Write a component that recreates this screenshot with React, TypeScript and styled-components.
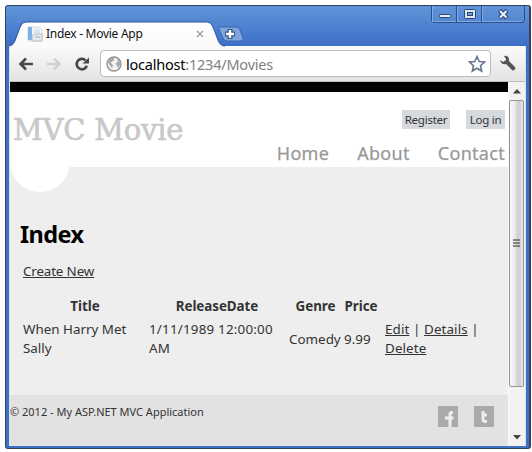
import React from 'react';
import styled, { createGlobalStyle } from 'styled-components';

const GlobalStyle = createGlobalStyle`
  * { box-sizing: border-box; }
  body { margin: 0; background: #fff; overflow: hidden; }
`;

const Screen = styled.div`
  width: 532px;
  height: 452px;
  padding: 5px 1px 2px 5px;
  font-family: "Noto Sans", "Open Sans", sans-serif;
  color: #333;
`;

const Window = styled.div`
  width: 526px;
  height: 444px;
  display: flex;
  flex-direction: column;
  border: 1px solid #34435c;
  border-right-width: 2px;
  border-radius: 3px;
  padding: 0 3px 2px;
  background: linear-gradient(#6295d9 0, #5488d2 14px, #3f70c8 38px, #3e70c6 100%);
`;

const TitleBar = styled.div`
  height: 40px;
  flex: none;
  display: flex;
`;

const TabArea = styled.div`
  position: relative;
  width: 245px;
  height: 40px;
`;

const TabShape = styled.svg`
  position: absolute;
  left: 0;
  top: 0;
`;

const TabContent = styled.div`
  position: relative;
  display: flex;
  align-items: center;
  height: 24px;
  margin: 16px 0 0 18px;
`;

const TabTitle = styled.span`
  width: 145px;
  margin-left: 3px;
  font-size: 12px;
  line-height: 24px;
  letter-spacing: -0.28px;
  color: #111;
  white-space: nowrap;
`;

const WindowControls = styled.div`
  display: flex;
  height: 17px;
  margin-left: auto;
  margin-right: 1px;
  border: 1px solid #2d4f8c;
  border-top: 0;
  border-radius: 0 0 4px 4px;
  box-shadow: inset 0 -1px #83abe2;
`;

const ControlButton = styled.div<{ $width: number }>`
  width: ${p => p.$width}px;
  display: flex;
  align-items: center;
  justify-content: center;
  border-left: 1px solid #83abe2;
  & + & { box-shadow: -1px 0 #2d4f8c; }
`;

const Body = styled.div`
  flex: 1;
  min-height: 0;
  display: flex;
  flex-direction: column;
  border-left: 1px solid #dce0e8;
  border-right: 1px solid #dce0e8;
`;

const Toolbar = styled.div`
  height: 36px;
  flex: none;
  display: flex;
  align-items: center;
  padding: 0 8px;
  background: linear-gradient(#fbfbfb, #e3e3e3);
  border-bottom: 1px solid #bcbcbc;
`;

const NavIcon = styled.svg`
  flex: none;
  margin-right: 12px;
`;

const AddressBar = styled.div`
  width: 391px;
  height: 27px;
  margin-left: -2px;
  display: flex;
  align-items: center;
  padding: 0 4px 0 5px;
  background: #fff;
  border: 1px solid #bdbdbd;
  border-radius: 4px;
`;

const Url = styled.span`
  flex: 1;
  margin-left: 4px;
  font-size: 14.5px;
  line-height: 24px;
  letter-spacing: -0.22px;
  color: #808080;
  white-space: nowrap;
`;

const Host = styled.span`
  color: #000;
`;

const Wrench = styled.svg`
  margin-left: 8px;
`;

const Viewport = styled.div`
  flex: 1;
  min-height: 0;
  display: flex;
`;

const Page = styled.div`
  width: 498px;
  display: flex;
  flex-direction: column;
  background: #eee;
`;

const Header = styled.header`
  height: 85px;
  display: flex;
  justify-content: space-between;
  border-top: 10px solid #000;
  background: #fff;
`;

const Brand = styled.div`
  position: relative;
  padding: 20px 0 0 3px;
  font: 29px/36px "DejaVu Serif", serif;
  letter-spacing: -0.2px;
  color: #c8c8c8;
  -webkit-text-stroke: 0.6px #c8c8c8;
  white-space: nowrap;
`;

const BrandCircle = styled.div`
  position: absolute;
  left: 0;
  top: 40px;
  width: 60px;
  height: 60px;
  border-radius: 50%;
  background: #fff;
`;

const BrandName = styled.span`
  position: relative;
`;

const HeaderRight = styled.div`
  display: flex;
  flex-direction: column;
  align-items: flex-end;
  padding: 18px 3px 0 0;
`;

const Account = styled.div`
  display: flex;
  gap: 16px;
`;

const AccountLink = styled.span<{ $width: number }>`
  width: ${p => p.$width}px;
  height: 19px;
  text-align: center;
  font-size: 11.5px;
  line-height: 19px;
  letter-spacing: -0.25px;
  background: #d6d9de;
  white-space: nowrap;
`;

const Menu = styled.nav`
  display: flex;
  gap: 28px;
  margin-top: 11px;
  font-size: 18px;
  line-height: 26px;
  letter-spacing: 0.3px;
  color: #999;
  -webkit-text-stroke: 0.25px #999;
`;

const Main = styled.main`
  flex: 1;
  padding: 51px 10px 0;
  font-size: 13.4px;
  line-height: 19px;
`;

const Heading = styled.h2`
  margin: 0;
  font-size: 23.5px;
  line-height: 32px;
  letter-spacing: -0.6px;
  color: #000;
`;

const CreateRow = styled.p`
  margin: 12px 0 0 3px;
  letter-spacing: -0.15px;
`;

const MovieGrid = styled.div`
  display: grid;
  grid-template-columns: 124px 136px 51px 34px 100px;
  column-gap: 4px;
  row-gap: 4px;
  align-items: center;
  margin: 16px 0 0 3px;
`;

const HeadCell = styled.div<{ $shift?: number }>`
  margin-left: ${p => (p.$shift ?? 0) * 2}px;
  text-align: center;
  font-weight: 700;
  letter-spacing: -0.05px;
`;

const Cell = styled.div<{ $shift?: number; $tracking?: number }>`
  margin-left: ${p => p.$shift ?? 0}px;
  letter-spacing: ${p => p.$tracking ?? 0}px;
  white-space: nowrap;
`;

const Footer = styled.footer`
  height: 51px;
  display: flex;
  background: #e2e2e2;
  font-size: 11px;
`;

const Copyright = styled.span`
  flex: 1;
  padding-top: 8px;
  line-height: 18px;
`;

const Social = styled.div`
  display: flex;
  gap: 16px;
  padding: 11px 14px 0 0;
`;

const ScrollBar = styled.div`
  width: 17px;
  display: flex;
  flex-direction: column;
  background: #f2f2f2;
  border-left: 1px solid #fafafa;
`;

const ScrollArrow = styled.div`
  height: 18px;
  display: flex;
  align-items: center;
  justify-content: center;
`;

const ScrollThumb = styled.div`
  height: 287px;
  width: 15px;
  display: flex;
  align-items: center;
  justify-content: center;
  border: 1px solid #949494;
  border-radius: 2px;
  background: linear-gradient(90deg, #f8f8f8 0, #e9e9eb 40%, #cfcfd3 55%, #d2d2d6 75%, #e8e8ea 100%);
`;

const Spacer = styled.div`
  flex: 1;
`;

function App() {
  return (
    <Screen>
      <GlobalStyle />
      <Window>
        <TitleBar>
          <TabArea>
            <TabShape width="245" height="41" viewBox="0 0 245 41">
              <defs>
                <linearGradient id="tab" x1="0" y1="0" x2="0" y2="1">
                  <stop offset="0" stopColor="#fff" />
                  <stop offset="1" stopColor="#fafafa" />
                </linearGradient>
              </defs>
              <path d="M0 41C5 39 6 36 8 30L11 22Q13 16 17 16H198Q202 16 204 21L209 34Q211 40 216 40V41Z" fill="url(#tab)" />
              <path d="M0 40C5 38 6 35 8 29L11 21Q13 16 17 16H198Q202 16 204 21L209 34Q211 40 216 40" fill="none" stroke="#2c559f" strokeWidth="1" />
              <path d="M210 21H227Q230 21 231 24L234 32Q235 35 232 35H218Q215 35 214 32L210 23Q209 21 210 21Z" fill="#7fa5dc" stroke="#3967b1" />
              <path d="M216 28H226M221 23V33" stroke="#35588e" strokeWidth="5" />
              <path d="M217 28H225M221 24V32" stroke="#fff" strokeWidth="2.400" />
            </TabShape>
            <TabContent>
              <svg width="16" height="16" viewBox="0 0 16 16">
                <path d="M1 1H12L15 4V15H1Z" fill="#f4f5f6" stroke="#d4d8dc" />
                <path d="M1 1H5V14H1Z" fill="#79b2e4" />
                <path d="M7 4H13M7 6H13" stroke="#d0d5d9" />
                <path d="M7 8H15V15H5V10Z" fill="#e5e9eb" stroke="#b9c1c7" />
                <path d="M8 11H13" stroke="#aab3b9" />
              </svg>
              <TabTitle>Index - Movie App</TabTitle>
              <svg width="16" height="10" viewBox="0 0 16 10">
                <path d="M6 2L12 8M12 2L6 8" stroke="#a0a0a0" strokeWidth="1.400" />
              </svg>
            </TabContent>
          </TabArea>
          <WindowControls>
            <ControlButton $width={25}>
              <svg width="14" height="10"><rect x="1.500" y="5.500" width="11" height="3" rx="1" fill="#e8eef6" stroke="#294672" /></svg>
            </ControlButton>
            <ControlButton $width={25}>
              <svg width="12" height="11">
                <rect x="0.500" y="0.500" width="11" height="9" rx="1" fill="#dce7f5" stroke="#294672" />
                <rect x="3.500" y="3.500" width="5" height="3" fill="#6e9bda" stroke="#294672" />
              </svg>
            </ControlButton>
            <ControlButton $width={42}>
              <svg width="13" height="11">
                <path d="M2.500 1.500L10 9M10 1.500L2.500 9" stroke="#294672" strokeWidth="4.400" />
                <path d="M3 2L9.500 8.500M9.500 2L3 8.500" stroke="#e4ecf7" strokeWidth="2.300" />
              </svg>
            </ControlButton>
          </WindowControls>
        </TitleBar>
        <Body>
          <Toolbar>
            <NavIcon width="16" height="14" viewBox="0 0 16 14">
              <path d="M15 7H3M8 1.500L2.500 7L8 12.500" fill="none" stroke="#484848" strokeWidth="2.600" />
            </NavIcon>
            <NavIcon width="16" height="14" viewBox="0 0 16 14">
              <path d="M1 7H13M8 1.500L13.500 7L8 12.500" fill="none" stroke="#d0d0d0" strokeWidth="2.400" />
            </NavIcon>
            <NavIcon width="16" height="16" viewBox="0 0 16 16">
              <path d="M11.500 4.300A5.200 5.200 0 1 0 12.800 9.800" fill="none" stroke="#484848" strokeWidth="2.700" />
              <path d="M15 1.500V7.500H8.500Z" fill="#484848" />
            </NavIcon>
            <AddressBar>
              <svg width="16" height="16" viewBox="0 0 16 16">
                <circle cx="8" cy="8" r="7" fill="#f3f3f3" stroke="#909090" strokeWidth="1.300" />
                <path d="M3 3L7 1.500L8.500 3L6.500 5.500L4.500 6.500L7 9L6 12.500L4.500 10L2 7ZM11 3L13 4L14.500 8L12 12L11 10L9.500 7L12 6Z" fill="#a8a8a8" />
              </svg>
              <Url><Host>localhost</Host>:1234/Movies</Url>
              <svg width="18" height="18" viewBox="0 0 18 18">
                <path d="M9 1.500L11.200 6.500L16.500 7L12.500 10.700L13.700 16L9 13.200L4.300 16L5.500 10.700L1.500 7L6.800 6.500Z" fill="#fff" stroke="#66758b" strokeWidth="1.600" />
              </svg>
            </AddressBar>
            <Wrench width="17" height="17" viewBox="0 0 17 17">
              <path d="M5 1Q9 0 10 4L10 6L16 12Q17 14 15 15Q14 16 13 15L7 9Q2 10 1 5L4 7L7 5V4Z" fill="#555" />
            </Wrench>
          </Toolbar>
          <Viewport>
            <Page>
              <Header>
                <Brand>
                  <BrandCircle />
                  <BrandName>MVC Movie</BrandName>
                </Brand>
                <HeaderRight>
                  <Account>
                    <AccountLink $width={48}>Register</AccountLink>
                    <AccountLink $width={39}>Log in</AccountLink>
                  </Account>
                  <Menu><span>Home</span><span>About</span><span>Contact</span></Menu>
                </HeaderRight>
              </Header>
              <Main>
                <Heading>Index</Heading>
                <CreateRow><u>Create New</u></CreateRow>
                <MovieGrid>
                  <HeadCell>Title</HeadCell>
                  <HeadCell $shift={-2}>ReleaseDate</HeadCell>
                  <HeadCell $shift={-1}>Genre</HeadCell>
                  <HeadCell $shift={-2}>Price</HeadCell>
                  <HeadCell />
                  <Cell>When Harry Met<br />Sally</Cell>
                  <Cell $shift={-2} $tracking={0.2}>1/11/1989 12:00:00<br />AM</Cell>
                  <Cell $shift={-2}>Comedy</Cell>
                  <Cell $shift={-2}>9.99</Cell>
                  <Cell $shift={1} $tracking={0.1}><u>Edit</u> | <u>Details</u> |<br /><u>Delete</u></Cell>
                </MovieGrid>
              </Main>
              <Footer>
                <Copyright>© 2012 - My ASP.NET MVC Application</Copyright>
                <Social>
                  <svg width="20" height="21" viewBox="0 0 20 21">
                    <rect width="20" height="21" fill="#aaa" />
                    <path d="M15 6.500H13.500Q12 6.500 12 8.500V21M7 12H15.500" fill="none" stroke="#eee" strokeWidth="3" />
                  </svg>
                  <svg width="20" height="21" viewBox="0 0 20 21">
                    <rect width="20" height="21" fill="#aaa" />
                    <path d="M9 5V13Q9 15.500 11.500 15.500H13M8 9H13" fill="none" stroke="#eee" strokeWidth="3" />
                  </svg>
                </Social>
              </Footer>
            </Page>
            <ScrollBar>
              <ScrollArrow><svg width="8" height="5"><path d="M0 4.500L4 0L8 4.500Z" fill="#444" /></svg></ScrollArrow>
              <ScrollThumb>
                <svg width="8" height="9"><path d="M0 1H7M0 4H7M0 7H7" stroke="#666" strokeWidth="1.500" /></svg>
              </ScrollThumb>
              <Spacer />
              <ScrollArrow><svg width="8" height="5"><path d="M0 0H8L4 4.500Z" fill="#444" /></svg></ScrollArrow>
            </ScrollBar>
          </Viewport>
        </Body>
      </Window>
    </Screen>
  );
}

export default App;
